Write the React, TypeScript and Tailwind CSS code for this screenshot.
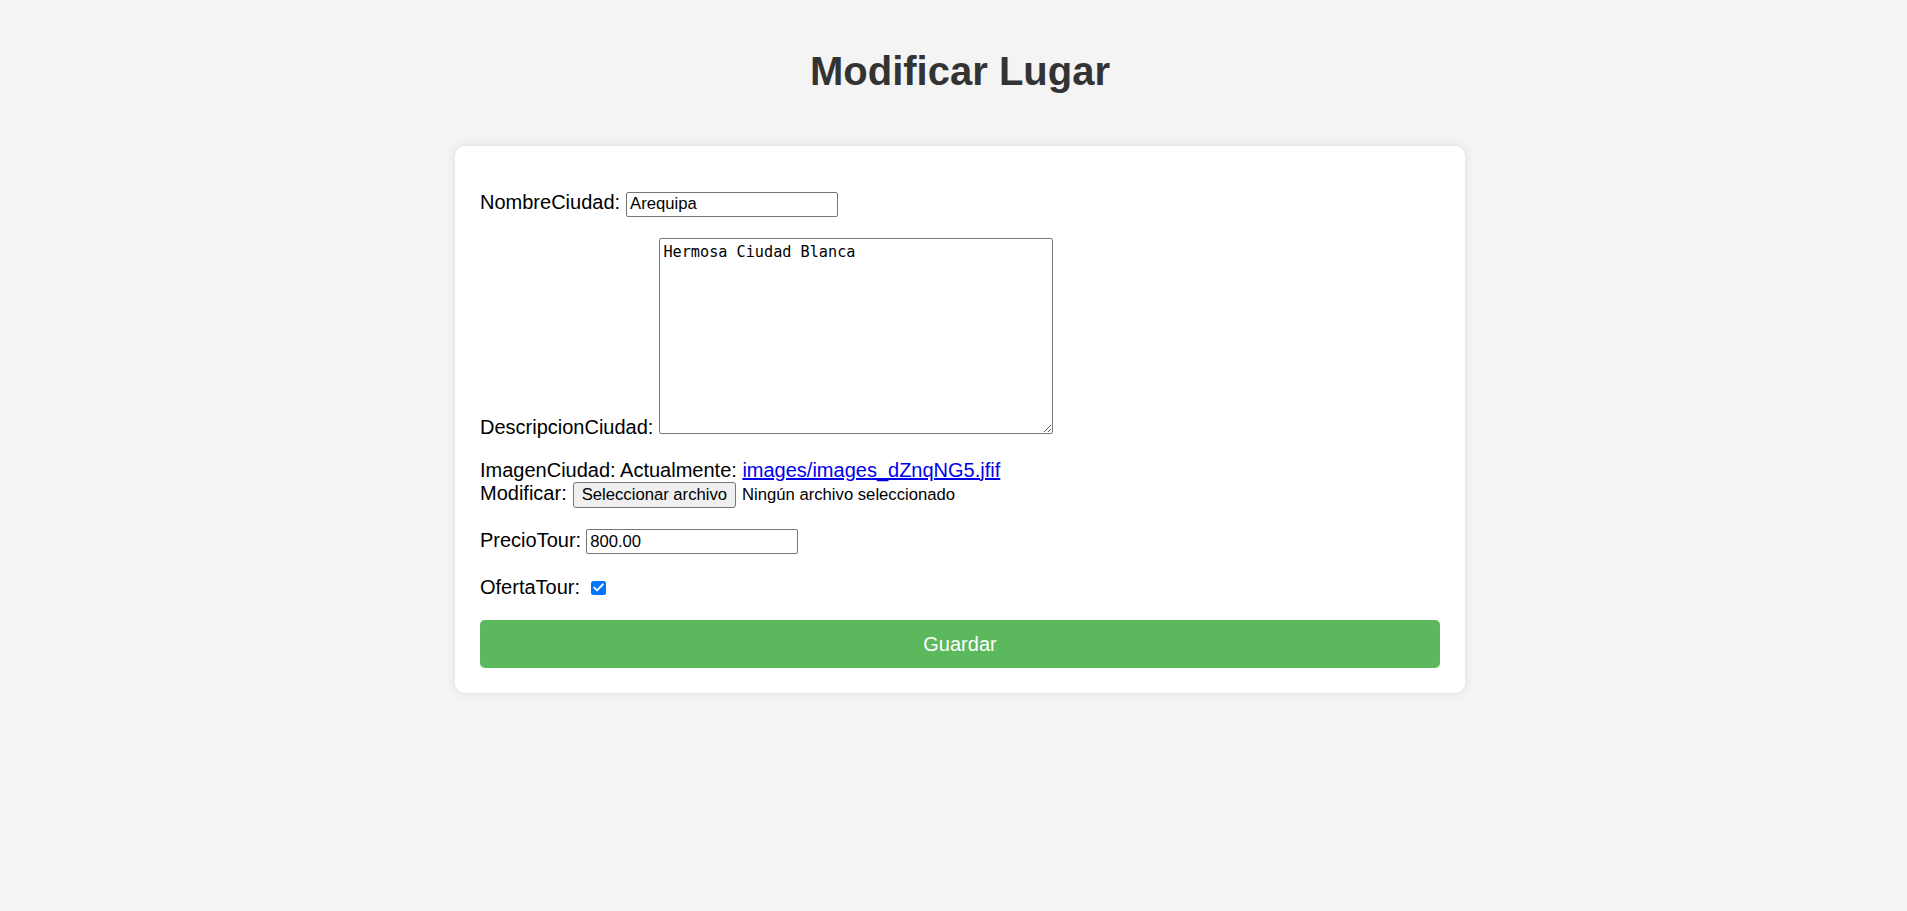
import React from "react";

export default function App() {
  const font = { fontFamily: '"Liberation Sans", Arial, sans-serif' };
  return (
    <div
      className="min-h-screen bg-[#f4f4f4] pl-[13px] pt-[48px] text-black"
      style={font}
    >
      <h1 className="text-center text-[40px] leading-[46px] font-bold text-[#333333] mb-[52px]">
        Modificar Lugar
      </h1>
      <div className="mx-auto w-[1010px] rounded-[10px] bg-white p-[25px] shadow-[0_0_10px_rgba(0,0,0,0.1)]">
        <form className="text-[20px] leading-[23px]" onSubmit={(e) => e.preventDefault()}>
          {/* NombreCiudad */}
          <div className="mt-[20px] flex items-baseline">
            <label>NombreCiudad:</label>
            <input
              type="text"
              defaultValue="Arequipa"
              className="ml-[6px] h-[25px] w-[212px] rounded-[2px] border border-[#767676] bg-white px-[3px] text-[16.67px] text-black outline-none"
              style={font}
            />
          </div>

          {/* DescripcionCiudad */}
          <div className="mt-[21px] flex items-end">
            <label className="mb-[-5px]">DescripcionCiudad:</label>
            <textarea
              defaultValue="Hermosa Ciudad Blanca"
              className="ml-[6px] h-[196px] w-[394px] resize rounded-[2px] border border-[#767676] bg-white px-[3px] pt-[4px] text-[15.2px] leading-[18px] text-black outline-none"
              style={{ fontFamily: '"DejaVu Sans Mono", "Liberation Mono", monospace' }}
            />
          </div>

          {/* ImagenCiudad */}
          <div className="mt-[25px]">
            ImagenCiudad: Actualmente:{" "}
            <a href="#" className="text-[#0000ee] underline">
              images/images_dZnqNG5.jfif
            </a>
          </div>
          <div className="flex items-baseline">
            <span>Modificar:</span>
            <button
              type="button"
              className="ml-[6px] h-[26px] rounded-[3px] border border-[#767676] bg-[#efefef] px-[8px] text-[16.67px] leading-[20px] text-black"
              style={font}
            >
              Seleccionar archivo
            </button>
            <span className="ml-[6px] text-[16.67px]">Ningún archivo seleccionado</span>
          </div>

          {/* PrecioTour */}
          <div className="mt-[21px] flex items-baseline">
            <label>PrecioTour:</label>
            <input
              type="text"
              defaultValue="800.00"
              className="ml-[5px] h-[25px] w-[212px] rounded-[2px] border border-[#767676] bg-white px-[3px] text-[16.67px] text-black outline-none"
              style={font}
            />
          </div>

          {/* OfertaTour */}
          <div className="mt-[22px] flex items-center">
            <label>OfertaTour:</label>
            <span className="ml-[11px] flex h-[14px] w-[15px] items-center justify-center rounded-[2.5px] bg-[#0075ff]">
              <svg width="11" height="9" viewBox="0 0 11 9" fill="none">
                <path
                  d="M1.2 4.6 L4.1 7.4 L9.8 1.4"
                  stroke="white"
                  strokeWidth="2"
                  strokeLinecap="round"
                  strokeLinejoin="round"
                />
              </svg>
            </span>
          </div>

          {/* Guardar */}
          <button
            type="submit"
            className="mt-[21px] flex h-[48px] w-full items-center justify-center rounded-[5px] bg-[#5cb85c] text-[20px] text-white"
            style={font}
          >
            Guardar
          </button>
        </form>
      </div>
    </div>
  );
}
